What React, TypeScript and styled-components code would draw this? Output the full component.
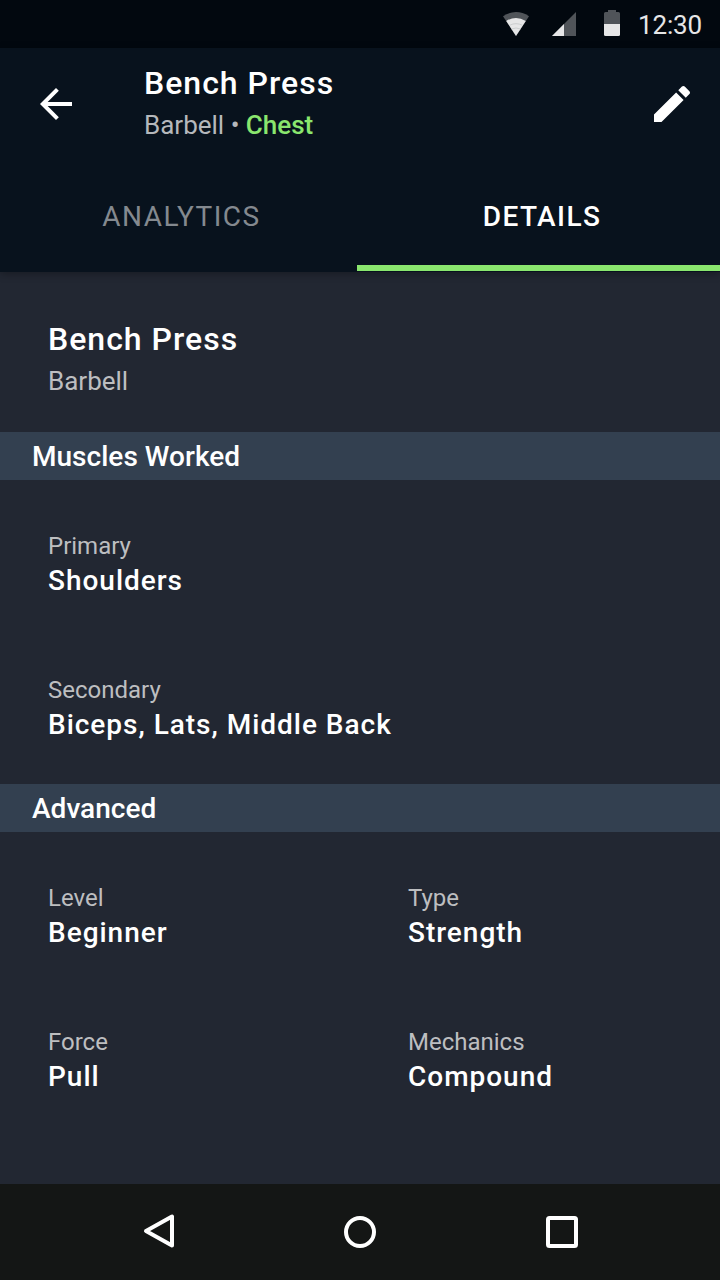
import React from "react";
import styled, { createGlobalStyle } from "styled-components";

const GlobalStyle = createGlobalStyle`
  *, *::before, *::after { box-sizing: border-box; }
  body {
    margin: 0;
    background: #222732;
    font-family: Roboto, "Liberation Sans", sans-serif;
  }
  svg { display: block; }
`;

const Screen = styled.div`
  display: flex;
  flex-direction: column;
  width: 720px;
  height: 1280px;
  overflow: hidden;
  background: #222732;
  color: #fff;
`;

const StatusBar = styled.div`
  display: flex;
  flex: none;
  align-items: flex-end;
  justify-content: flex-end;
  height: 48px;
  padding: 0 18px 12px 0;
  background: #02080f;
`;

const StatusIcon = styled.svg<{ $gap: number }>`
  margin-right: ${(p) => p.$gap}px;
`;

const Clock = styled.span`
  margin-bottom: -5px;
  font-size: 26px;
  line-height: 32px;
  letter-spacing: -0.15px;
  color: #e6e6e7;
`;

const Header = styled.header`
  flex: none;
  height: 224px;
  background: #08121d;
  box-shadow: 0 2px 8px rgba(0, 0, 0, 0.3);
`;

const Toolbar = styled.div`
  display: flex;
  height: 112px;
  padding: 0 24px 0 32px;
`;

const IconButton = styled.button`
  width: 48px;
  height: 48px;
  margin: 32px 0 0;
  padding: 0;
  border: 0;
  background: none;
  color: #fff;
`;

const Heading = styled.div`
  flex: 1;
  padding: 15px 0 0 64px;
`;

const Title = styled.h1`
  margin: 0;
  font-size: 32px;
  font-weight: 500;
  line-height: 40px;
  letter-spacing: 1px;
`;

const Subtitle = styled.p<{ $color: string }>`
  margin: 6px 0 0;
  font-size: 26px;
  line-height: 32px;
  color: ${(p) => p.$color};
`;

const Accent = styled.span`
  font-weight: 500;
  color: #8ae66e;
`;

const Tabs = styled.nav`
  display: flex;
  height: 112px;
`;

const Tab = styled.button<{ $active?: boolean }>`
  flex: ${(p) => (p.$active ? "0 0 363px" : "1")};
  padding: ${(p) => (p.$active ? "8px 0 0 7px" : "2px 0 0 6px")};
  border: 0;
  border-bottom: ${(p) => (p.$active ? "6px solid #8ae66e" : "0")};
  margin-bottom: 1px;
  background: none;
  font-family: inherit;
  font-size: 28px;
  font-weight: ${(p) => (p.$active ? 500 : 400)};
  letter-spacing: ${(p) => (p.$active ? 1.4 : 1.5)}px;
  color: ${(p) => (p.$active ? "#fff" : "#84898f")};
`;

const Content = styled.main`
  flex: 1;
`;

const Intro = styled.section`
  height: 160px;
  padding: 47px 48px 0;
`;

const SectionTitle = styled.h2`
  height: 48px;
  margin: 0;
  padding: 1px 32px 0;
  background: #334050;
  font-size: 28px;
  font-weight: 500;
  line-height: 48px;
  letter-spacing: 0.03px;
`;

const Fields = styled.dl<{ $columns: number }>`
  display: grid;
  grid-template-columns: repeat(${(p) => p.$columns}, 1fr);
  grid-auto-rows: 144px;
  margin: 0;
  padding: 16px 0 0;
`;

const Field = styled.div`
  padding: 34px 0 0 48px;
`;

const Label = styled.dt`
  font-size: 24px;
  line-height: 32px;
  color: #bdbec0;
`;

const Value = styled.dd`
  margin: 3px 0 0;
  font-size: 28px;
  font-weight: 500;
  line-height: 32px;
  letter-spacing: 0.98px;
`;

const NavBar = styled.footer`
  display: flex;
  flex: none;
  justify-content: space-between;
  align-items: center;
  height: 96px;
  padding: 0 134px 0 134px;
  background: #141615;
`;

type Item = { label: string; value: string };

const muscles: Item[] = [
  { label: "Primary", value: "Shoulders" },
  { label: "Secondary", value: "Biceps, Lats, Middle Back" },
];

const advanced: Item[] = [
  { label: "Level", value: "Beginner" },
  { label: "Type", value: "Strength" },
  { label: "Force", value: "Pull" },
  { label: "Mechanics", value: "Compound" },
];

function FieldGrid({ items, columns }: { items: Item[]; columns: number }) {
  return (
    <Fields $columns={columns}>
      {items.map((item) => (
        <Field key={item.label}>
          <Label>{item.label}</Label>
          <Value>{item.value}</Value>
        </Field>
      ))}
    </Fields>
  );
}

function StatusIcons() {
  return (
    <>
      <StatusIcon $gap={23} width="26" height="24" viewBox="0 0 26 24">
        <path d="M0 4.2Q13 -4.2 26 4.2L13 24Z" fill="#505459" />
        <path d="M3.2 9Q13 3 22.8 9L13 24Z" fill="#e6e6e7" />
        <path d="M6.5 13.3Q13 10 19.5 13.3M8.5 17Q13 15 17.5 17" fill="none" stroke="#c4c6c8" strokeWidth="0.8" />
      </StatusIcon>
      <StatusIcon $gap={28} width="24" height="24" viewBox="0 0 24 24">
        <path d="M24 0V24H0Z" fill="#505459" />
        <path d="M12 12V24H0Z" fill="#e6e6e7" />
      </StatusIcon>
      <StatusIcon $gap={18} width="16" height="26" viewBox="0 0 16 26">
        <path d="M4 0H12V2H14.5Q16 2 16 3.5V14H0V3.5Q0 2 1.5 2H4Z" fill="#505459" />
        <path d="M0 14H16V24.5Q16 26 14.5 26H1.5Q0 26 0 24.5Z" fill="#e6e6e7" />
      </StatusIcon>
    </>
  );
}

export default function App() {
  return (
    <>
      <GlobalStyle />
      <Screen>
        <StatusBar>
          <StatusIcons />
          <Clock>12:30</Clock>
        </StatusBar>
        <Header>
          <Toolbar>
            <IconButton aria-label="Back">
              <svg width="48" height="48" viewBox="0 0 24 24" fill="currentColor">
                <path d="M20 11H7.83l5.59-5.59L12 4l-8 8 8 8 1.41-1.41L7.83 13H20v-2z" />
              </svg>
            </IconButton>
            <Heading>
              <Title>Bench Press</Title>
              <Subtitle $color="#b5b8bc">
                Barbell • <Accent>Chest</Accent>
              </Subtitle>
            </Heading>
            <IconButton aria-label="Edit">
              <svg width="48" height="48" viewBox="0 0 24 24" fill="currentColor">
                <path d="M3 17.25V21h3.75L17.81 9.94l-3.75-3.75L3 17.25zM20.71 7.04c.39-.39.39-1.02 0-1.41l-2.34-2.34c-.39-.39-1.02-.39-1.41 0l-1.83 1.83 3.75 3.75 1.83-1.83z" />
              </svg>
            </IconButton>
          </Toolbar>
          <Tabs>
            <Tab>ANALYTICS</Tab>
            <Tab $active>DETAILS</Tab>
          </Tabs>
        </Header>
        <Content>
          <Intro>
            <Title as="h2">Bench Press</Title>
            <Subtitle $color="#bdbec0">Barbell</Subtitle>
          </Intro>
          <SectionTitle>Muscles Worked</SectionTitle>
          <FieldGrid items={muscles} columns={1} />
          <SectionTitle>Advanced</SectionTitle>
          <FieldGrid items={advanced} columns={2} />
        </Content>
        <NavBar>
          <svg width="48" height="48" viewBox="0 0 48 48" fill="none" stroke="#fff" strokeWidth="4" strokeLinejoin="round">
            <path d="M38 8.5V37.5L12 23Z" />
          </svg>
          <svg width="48" height="48" viewBox="0 0 48 48" fill="none" stroke="#fff" strokeWidth="4">
            <circle cx="24" cy="24" r="14" />
          </svg>
          <svg width="48" height="48" viewBox="0 0 48 48" fill="none" stroke="#fff" strokeWidth="4">
            <rect x="10" y="10" width="28" height="28" rx="1.5" />
          </svg>
        </NavBar>
      </Screen>
    </>
  );
}
